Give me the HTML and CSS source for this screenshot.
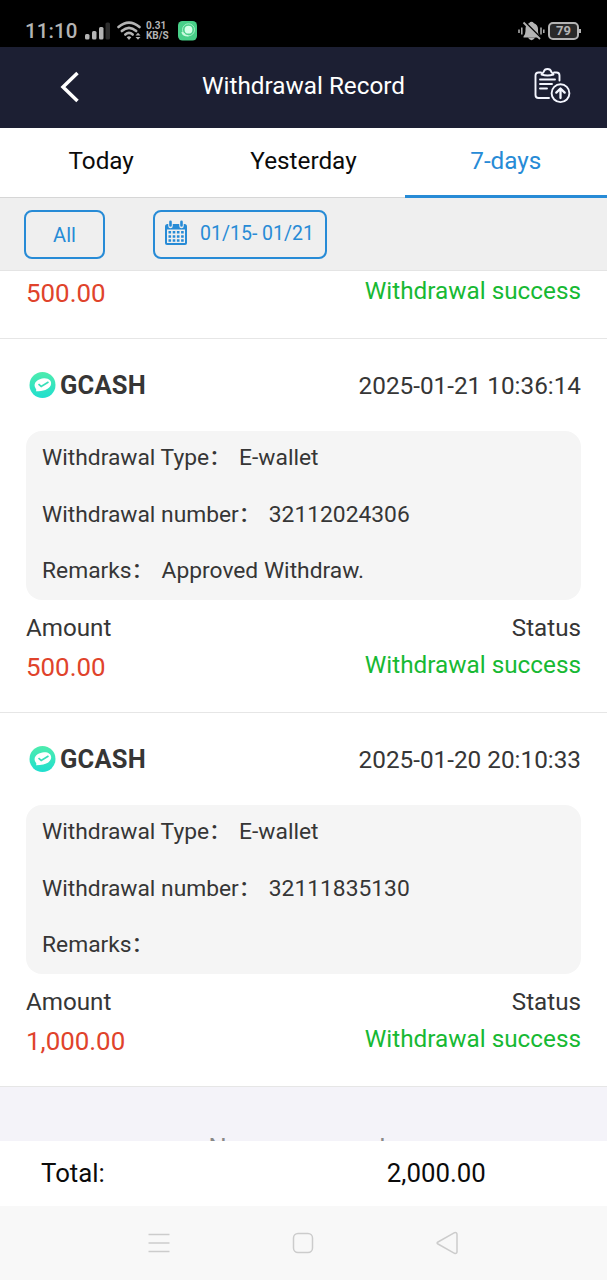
FILE: index.html
```html
<!DOCTYPE html>
<html lang="en">
<head>
<meta charset="utf-8">
<title>Withdrawal Record</title>
<link rel="stylesheet" href="styles.css">
</head>
<body>
<div class="status-bar">
  <span class="clock">11:10</span>
  <svg class="signal" width="26" height="18" viewBox="0 0 26 18"><g fill="#b4b4b4"><rect x="0" y="12" width="4.5" height="5.5" rx="1.5"/><rect x="7" y="9" width="4.5" height="8.500" rx="1.500"/><rect x="14" y="5" width="4.500" height="12.500" rx="1.500"/></g><rect x="20.500" y="0.500" width="4.500" height="17" rx="1.500" fill="#2d2d2d"/></svg>
  <svg class="wifi" width="25" height="20" viewBox="0 0 25 20"><g fill="none" stroke="#b4b4b4" stroke-width="2.600" stroke-linecap="round"><path d="M1.500 6Q12 -2.800 22.500 6"/><path d="M4.800 10Q12 3.600 19.200 10"/><path d="M8.300 13.500Q12 10.300 15.700 13.500"/></g><path d="M9.700 16.200Q12 14.300 14.300 16.200L12 19ZM18.500 14.500L21 11.800L23.500 14.500ZM18.500 16L23.500 16L21 18.700Z" fill="#b4b4b4"/></svg>
  <div class="speed"><span>0.31</span><span>KB/S</span></div>
  <svg class="app-badge" width="19" height="20" viewBox="0 0 19 20"><rect width="19" height="19.500" rx="4.500" fill="#48cf88"/><circle cx="10.500" cy="8.800" r="6" fill="none" stroke="#a2efc5"/><circle cx="10.500" cy="8.700" r="3.900" fill="#d5ffe7"/><path d="M4 11Q5 15 10.500 14.800M4.500 11.500L7 13.500" fill="none" stroke="#c9fadd" stroke-width="1.400"/></svg>
  <svg class="muted" width="27" height="20" viewBox="0 0 27 20"><path d="M5.500 15.500Q7.500 13.500 7.500 10V8Q7.500 3.500 11 2.200Q13.500 -.5 16 2.200Q20 4 20 8V11Q20 13.500 22 15.500V16.500H5.500ZM10 16.800H17Q13.500 21.500 10 16.800Z" fill="#b4b4b4"/><path d="M7.300 1.500L23.800 18" stroke="#000" stroke-width="1.800"/><path d="M5.500 1.500L22 18" stroke="#b4b4b4" stroke-width="1.800"/><path d="M1 8.500V12M3.800 6.500V13.500M23 6.500V13.500M25.800 8.500V12" stroke="#b4b4b4" stroke-width="1.500"/></svg>
  <div class="battery"><span>79</span></div>
</div>
<header class="header">
  <svg class="back" width="20" height="32" viewBox="0 0 20 32"><path d="M17.500 2L3 16L17.500 30" fill="none" stroke="#fff" stroke-width="3.500"/></svg>
  <h1 class="title">Withdrawal Record</h1>
  <svg class="record-icon" width="37" height="36" viewBox="0 0 37 36"><g fill="none" stroke="#f4f6ff" stroke-width="1.900" stroke-linecap="round" stroke-linejoin="round"><path d="M7 4.500H4.500Q1.500 4.500 1.500 7.500V27Q1.500 30 4.500 30H15M20 4.500H22.500Q25.500 4.500 25.500 7.500V12.500M7.500 6.500L9.700 3.800Q10.500 1 13.500 1Q16.500 1 17.300 3.800L19.500 6.500Q13.500 8.500 7.500 6.500ZM6 11.500H21M6 16H18M6 20.500H13"/><circle cx="26.500" cy="25.200" r="8.900"/><path d="M26.500 30V21M22.300 24.600L26.500 20.500L30.700 24.600" stroke-width="2.300"/></g></svg>
</header>
<nav class="tabs">
  <a class="tab">Today</a><a class="tab">Yesterday</a><a class="tab active">7-days</a>
</nav>
<div class="filters">
  <button class="filter all">All</button>
  <button class="filter range"><svg width="24" height="26" viewBox="0 0 24 26"><path d="M1 6.500Q1 4 3.500 4H20.500Q23 4 23 6.500V23Q23 25 21 25H3Q1 25 1 23Z" fill="#278bd6"/><path d="M3 9.500H21V23H3Z" fill="#efefef"/><path d="M6.500 1.800V6M17.500 1.800V6" stroke="#efefef" stroke-width="4.500" stroke-linecap="round"/><path d="M6.500 1.800V5.500M17.500 1.800V5.500" stroke="#278bd6" stroke-width="2.600" stroke-linecap="round"/><path d="M4.500 12.200H20M4.500 16.400H20M4.500 20.600H20" stroke="#278bd6" stroke-width="2.500" stroke-dasharray="2.600 1.600"/></svg><span>01/15- 01/21</span></button>
</div>
<main class="list">
  <section class="record partial">
    <div class="values"><span class="amount">500.00</span><span class="state">Withdrawal success</span></div>
  </section>
  <section class="record">
    <div class="record-head"><svg class="coin" width="28" height="28" viewBox="0 0 28 28"><defs><linearGradient id="mint" x2="0" y2="1"><stop stop-color="#4eecad"/><stop offset="1" stop-color="#20dfcf"/></linearGradient></defs><circle cx="14.500" cy="14" r="13" fill="url(#mint)"/><path d="M8 20.300Q9 18.800 7.300 16.800C4.500 11.500 10.500 7.500 16 7.200C21 7 24.300 10 22.800 14.200C21 18.500 15 20.300 8 20.300Z" fill="#fff"/><path d="M10.500 13.200L13.200 15.400L20.500 11" fill="none" stroke="#38dfba" stroke-width="1.700"/></svg><strong class="wallet">GCASH</strong><time>2025-01-21 10:36:14</time></div>
    <div class="details">
      <p><span>Withdrawal Type<i class="colon">:</i></span><span>E-wallet</span></p>
      <p><span>Withdrawal number<i class="colon">:</i></span><span>32112024306</span></p>
      <p><span>Remarks<i class="colon">:</i></span><span>Approved Withdraw.</span></p>
    </div>
    <div class="labels"><span>Amount</span><span>Status</span></div>
    <div class="values"><span class="amount">500.00</span><span class="state">Withdrawal success</span></div>
  </section>
  <section class="record">
    <div class="record-head"><svg class="coin" width="28" height="28" viewBox="0 0 28 28"><circle cx="14.500" cy="14" r="13" fill="url(#mint)"/><path d="M8 20.300Q9 18.800 7.300 16.800C4.500 11.500 10.500 7.500 16 7.200C21 7 24.300 10 22.800 14.200C21 18.500 15 20.300 8 20.300Z" fill="#fff"/><path d="M10.500 13.200L13.200 15.400L20.500 11" fill="none" stroke="#38dfba" stroke-width="1.700"/></svg><strong class="wallet">GCASH</strong><time>2025-01-20 20:10:33</time></div>
    <div class="details">
      <p><span>Withdrawal Type<i class="colon">:</i></span><span>E-wallet</span></p>
      <p><span>Withdrawal number<i class="colon">:</i></span><span>32111835130</span></p>
      <p><span>Remarks<i class="colon">:</i></span></p>
    </div>
    <div class="labels"><span>Amount</span><span>Status</span></div>
    <div class="values"><span class="amount">1,000.00</span><span class="state">Withdrawal success</span></div>
  </section>
  <div class="end">No more records</div>
</main>
<footer class="total"><span>Total:</span><span class="sum">2,000.00</span></footer>
<div class="system-nav">
  <svg width="22" height="22" viewBox="0 0 22 22"><path d="M0.500 2.500H21.500M0.500 11H21.500M0.500 19.500H21.500"/></svg>
  <svg width="22" height="22" viewBox="0 0 22 22"><rect x="1.500" y="1.500" width="19" height="19" rx="4.500"/></svg>
  <svg width="22" height="24" viewBox="0 0 22 24"><path d="M2 11Q.2 12 2 13L18.500 22.300Q21 23 21 20.500V3.500Q21 1 18.500 1.700Z"/></svg>
</div>
</body>
</html>
```
FILE: styles.css
```css
* { box-sizing: border-box; }
body {
  margin: 0;
  width: 607px;
  height: 1280px;
  overflow: hidden;
  display: flex;
  flex-direction: column;
  background: #fff;
  color: #363636;
  font-family: Roboto, "Noto Sans CJK SC", sans-serif;
}
body > * { flex-shrink: 0; }
svg { display: block; flex-shrink: 0; }

.status-bar {
  height: 47px;
  background: #000;
  color: #b4b4b4;
  display: flex;
  align-items: center;
  padding: 14px 25px 0 25px;
}
.clock { font-size: 20.5px; width: 60px; letter-spacing: .1px; font-weight: 500; }
.wifi { margin-left: 6px; }
.speed { display: flex; flex-direction: column; font-size: 10px; line-height: 10px; font-weight: 700; margin-left: 4px; width: 32px; white-space: nowrap; }
.muted { margin-left: auto; margin-right: -2px; }
.battery {
  position: relative;
  width: 31px;
  height: 18px;
  margin-left: 5px;
  margin-right: 3px;
  border: 2px solid #b4b4b4;
  border-radius: 5px;
  background: #292929;
  font-size: 13px;
  font-weight: 700;
  line-height: 14px;
  text-align: center;
}
.battery::after {
  content: "";
  position: absolute;
  right: -4px;
  top: 5px;
  width: 2px;
  height: 4px;
  background: #b4b4b4;
}

.header {
  height: 81px;
  background: #1c1f33;
  color: #fff;
  display: flex;
  align-items: center;
  padding: 0 36px 2px 60px;
}
.title { margin: 0 0 2px 122px; font-size: 24.3px; font-weight: 400; line-height: 30px; white-space: nowrap; }
.record-icon { margin-left: auto; margin-bottom: 2px; }

.tabs { height: 70px; display: flex; border-bottom: 1px solid #d6d6d6; color: #0b0b0b; }
.tab { flex: 1; height: 71px; padding-bottom: 7px; display: flex; align-items: center; justify-content: center; font-size: 24.3px; }
.tab.active { color: #278bd6; border-bottom: 4px solid #278bd6; padding-bottom: 3px; }

.filters { height: 73px; background: #efefef; border-bottom: 1px solid #e4e4e4; display: flex; padding: 12px 24px; gap: 48px; }
.filter {
  height: 49px;
  padding: 0;
  border: 2px solid #278bd6;
  border-radius: 8px;
  background: none;
  color: #278bd6;
  font: 20px Roboto, sans-serif;
}
.all { width: 81px; }
.range { width: 174px; display: flex; align-items: center; padding: 0 0 3px 9px; gap: 12px; white-space: nowrap; }
.range span { font-size: 19.5px; }

.list { height: 870px; overflow: hidden; background: #f4f3f9; }
.record { height: 374px; background: #fff; border-bottom: 1px solid #e6e6e6; padding: 0 26px; }
.partial { height: 68px; }
.record-head { height: 92px; display: flex; align-items: center; padding-left: 2px; }
.wallet { font-size: 25.5px; margin-left: 4px; letter-spacing: .2px; }
time { margin-left: auto; font-size: 24.3px; }
.details { height: 169px; padding: 0 16px; background: #f5f5f5; border-radius: 16px; }
.details p { height: 56.5px; margin: 0; display: flex; align-items: center; padding-bottom: 3px; font-size: 22.8px; }
.colon { display: inline-block; width: 30px; padding-left: 2px; font-size: 26px; line-height: 20px; font-style: normal; font-weight: 500; }
.labels, .values { display: flex; justify-content: space-between; }
.labels { height: 45px; padding-top: 14px; font-size: 24.2px; line-height: 28px; }
.values { height: 44px; line-height: 44px; }
.amount { font-size: 25.9px; color: #e0432b; }
.state { font-size: 24.3px; line-height: 40px; color: #17b933; }
.end { padding-top: 46px; text-align: center; font-size: 25.5px; color: #888; }

.total { height: 65px; display: flex; align-items: center; padding: 0 0 1px 41px; color: #0b0b0b; font-size: 25.8px; }
.sum { margin-left: 282px; }

.system-nav { height: 74px; background: #f8f8f8; display: flex; align-items: center; justify-content: space-between; padding: 0 149px 0 148px; fill: none; stroke: #ccc; stroke-width: 1.5; }
```
